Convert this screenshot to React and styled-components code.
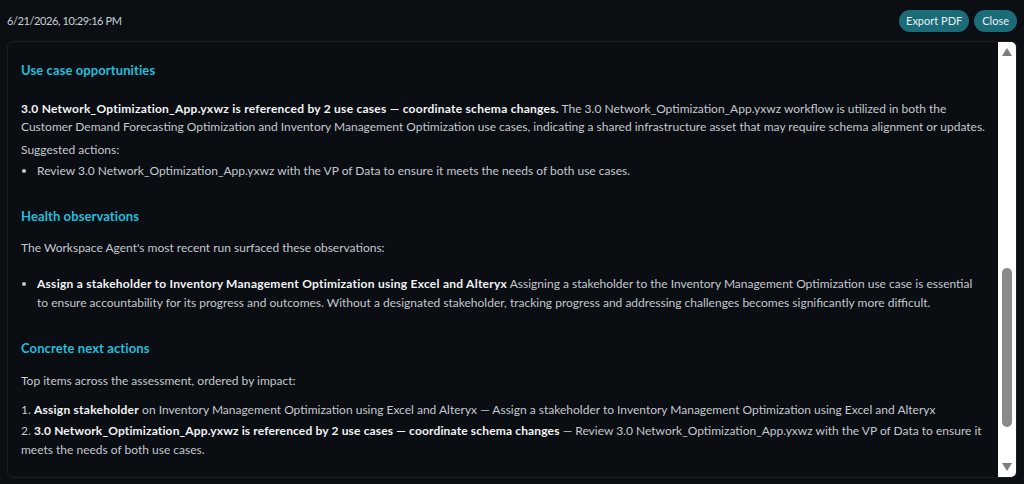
import React from 'react';
import styled, { createGlobalStyle } from 'styled-components';

const GlobalStyle = createGlobalStyle`
  html, body {
    margin: 0;
    padding: 0;
    background: #0b0f14;
    height: 484px;
    overflow: hidden;
  }
  body {
    font-family: Lato, "Noto Sans", "Liberation Sans", sans-serif;
    color: #c3c9cf;
  }
`;

const Page = styled.div`
  height: 484px;
  display: flex;
  flex-direction: column;
  box-sizing: border-box;
  padding: 0 7px 6px;
`;

const Header = styled.div`
  height: 41px;
  flex: none;
  display: flex;
  align-items: center;
  justify-content: space-between;
`;

const Stamp = styled.div`
  font-size: 11px;
  letter-spacing: -0.4px;
  color: #c9d0d6;
`;

const Actions = styled.div`
  display: flex;
  gap: 5px;
`;

const PillButton = styled.button`
  height: 22px;
  padding: 0 ${({ $pad }) => $pad || 7}px;
  border: none;
  border-radius: 11px;
  background: #1c6b78;
  color: #e6f2f4;
  font-family: inherit;
  font-size: 11px;
  cursor: pointer;
`;

const Panel = styled.div`
  flex: 1;
  min-height: 0;
  display: flex;
  border: 1px solid #1a1f26;
  border-radius: 6px;
  background: #0a0d12;
  overflow: hidden;
`;

const Content = styled.div`
  flex: 1;
  min-width: 0;
  padding: 19px 13px 0;
  font-size: 12px;
  line-height: 18.5px;
`;

const ScrollBar = styled.div`
  width: 18px;
  flex: none;
  display: flex;
  flex-direction: column;
  background: #ffffff;
`;

const ArrowButton = styled.div`
  height: 17px;
  flex: none;
  display: flex;
  justify-content: center;
  align-items: ${({ $down }) => ($down ? 'flex-start' : 'flex-end')};
  padding: ${({ $down }) => ($down ? '3px 0 0' : '0 0 3px')};
  box-sizing: border-box;

  &::before {
    content: '';
    width: 0;
    height: 0;
    border-left: 5px solid transparent;
    border-right: 5px solid transparent;
    ${({ $down }) => ($down ? 'border-top' : 'border-bottom')}: 8px solid #7d7d7d;
  }
`;

const Track = styled.div`
  flex: 1;
  padding-top: ${({ $offset }) => $offset}px;
`;

const Thumb = styled.div`
  height: ${({ $size }) => $size}px;
  margin: 0 4px;
  border-radius: 5px;
  background: #8a8a8a;
`;

const Section = styled.section`
  margin-top: ${({ $top }) => $top || 0}px;
`;

const Title = styled.h3`
  margin: 0 0 ${({ $gap }) => $gap || 14}px;
  font-size: 13px;
  letter-spacing: 0.1px;
  line-height: 18.5px;
  font-weight: 700;
  color: #1fbfdc;
`;

const Para = styled.p`
  margin: 0 0 4px;
`;

const Strong = styled.strong`
  color: #f2f4f6;
  font-weight: 700;
  letter-spacing: ${({ $track }) => $track ?? 0.25}px;
`;

const Bullets = styled.ul`
  margin: ${({ $top }) => $top || 0}px 0 0;
  padding-left: 16px;

  li + li {
    margin-top: 2.5px;
  }
`;

const Ranked = styled.div`
  margin-top: ${({ $top }) => $top || 0}px;
  display: flex;
  flex-direction: column;
  gap: 2.5px;
`;

export default function App() {
  return (
    <>
      <GlobalStyle />
      <Page>
        <Header>
          <Stamp>6/21/2026, 10:29:16 PM</Stamp>
          <Actions>
            <PillButton type="button">Export PDF</PillButton>
            <PillButton type="button" $pad={8}>Close</PillButton>
          </Actions>
        </Header>
        <Panel>
          <Content>
            <Section>
              <Title $gap={20}>Use case opportunities</Title>
              <Para>
                <Strong>3.0 Network_Optimization_App.yxwz is referenced by 2 use cases — coordinate schema changes.</Strong>{' '}
                The 3.0 Network_Optimization_App.yxwz workflow is utilized in both the Customer Demand Forecasting
                Optimization and Inventory Management Optimization use cases, indicating a shared infrastructure asset that
                may require schema alignment or updates.
              </Para>
              <Para>Suggested actions:</Para>
              <Bullets $top={-1}>
                <li>Review 3.0 Network_Optimization_App.yxwz with the VP of Data to ensure it meets the needs of both use cases.</li>
              </Bullets>
            </Section>
            <Section $top={26}>
              <Title>Health observations</Title>
              <Para>The Workspace Agent's most recent run surfaced these observations:</Para>
              <Bullets $top={17.5}>
                <li>
                  <Strong>Assign a stakeholder to Inventory Management Optimization using Excel and Alteryx</Strong>{' '}
                  Assigning a stakeholder to the Inventory Management Optimization use case is essential to ensure
                  accountability for its progress and outcomes. Without a designated stakeholder, tracking progress and
                  addressing challenges becomes significantly more difficult.
                </li>
              </Bullets>
            </Section>
            <Section $top={27}>
              <Title>Concrete next actions</Title>
              <Para>Top items across the assessment, ordered by impact:</Para>
              <Ranked $top={11}>
                <div>
                  1. <Strong>Assign stakeholder</Strong> on Inventory Management Optimization using Excel and Alteryx — Assign
                  a stakeholder to Inventory Management Optimization using Excel and Alteryx
                </div>
                <div>
                  2. <Strong $track={0.15}>3.0 Network_Optimization_App.yxwz is referenced by 2 use cases — coordinate schema changes</Strong>{' '}
                  — Review 3.0 Network_Optimization_App.yxwz with the VP of Data to ensure it meets the needs of both use
                  cases.
                </div>
              </Ranked>
            </Section>
          </Content>
          <ScrollBar>
            <ArrowButton />
            <Track $offset={209}>
              <Thumb $size={159} />
            </Track>
            <ArrowButton $down />
          </ScrollBar>
        </Panel>
      </Page>
    </>
  );
}
